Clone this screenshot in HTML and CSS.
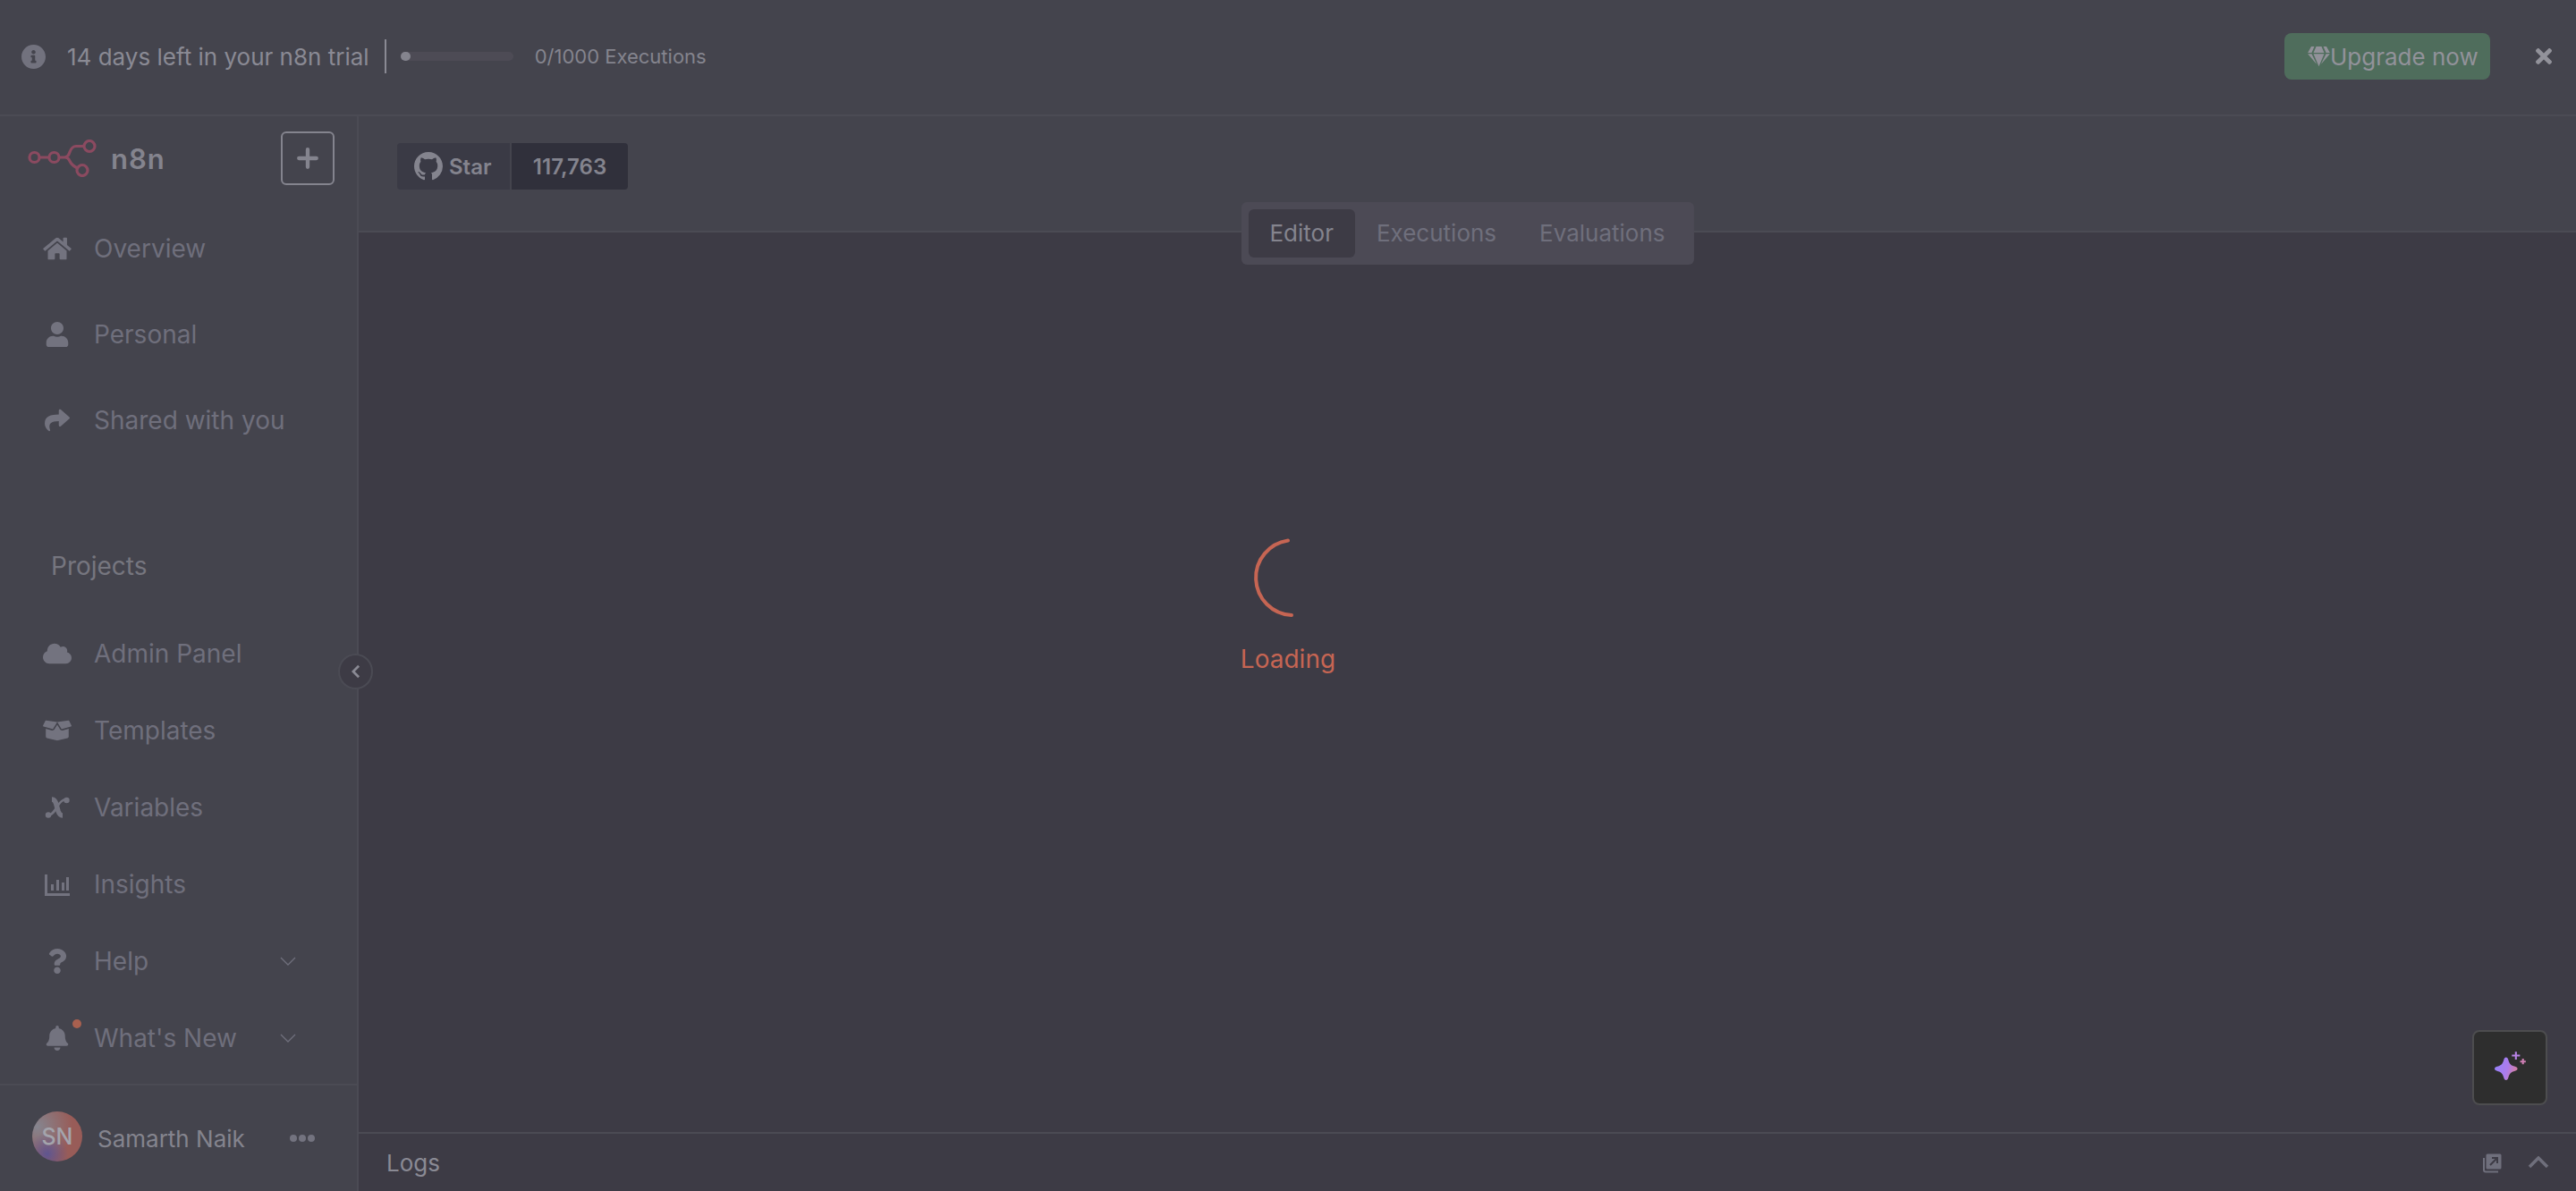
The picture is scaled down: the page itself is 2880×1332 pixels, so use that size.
FILE: index.html
```html
<!DOCTYPE html>
<html lang="en">

<head>
    <meta charset="UTF-8">
    <meta name="viewport" content="width=device-width, initial-scale=1.0">
    <title>n8n - Loading</title>
    <link rel="stylesheet" href="styles.css">
</head>

<body>
    <!-- Trial banner -->
    <div class="banner">
        <svg class="info-icon" viewBox="8 8 496 496"><path d="M256 8C119.043 8 8 119.083 8 256c0 136.997 111.043 248 248 248s248-111.003 248-248C504 119.083 392.957 8 256 8zm0 110c23.196 0 42 18.804 42 42s-18.804 42-42 42-42-18.804-42-42 18.804-42 42-42zm56 254c0 6.627-5.373 12-12 12h-88c-6.627 0-12-5.373-12-12v-24c0-6.627 5.373-12 12-12h12v-64h-12c-6.627 0-12-5.373-12-12v-24c0-6.627 5.373-12 12-12h64c6.627 0 12 5.373 12 12v100h12c6.627 0 12 5.373 12 12v24z"/></svg>
        <span class="trial-text">14 days left in your n8n trial</span>
        <span class="trial-sep"></span>
        <div class="progress"><div class="progress-dot"></div></div>
        <span class="exec-count">0/1000 Executions</span>
        <button class="upgrade">
            <svg class="gem" viewBox="0 0 576 512"><path d="M485.5 0L576 160H474.9L405.7 0h79.8zm-128 0l69.2 160H149.3L218.5 0h139zm-267 0h79.8l-69.2 160H0L90.5 0zM0 192h100.7l123 251.7c1.5 3.1-2.7 5.9-5 3.3L0 192zm148.2 0h279.6l-137 318.2c-1 2.4-4.5 2.4-5.5 0L148.2 192zm204.1 251.7l123-251.7H576L357.3 446.9c-2.3 2.7-6.5-.1-5-3.2z"/></svg>
            Upgrade now
        </button>
        <svg class="close-icon" viewBox="0 80 352 352"><path d="M242.72 256l100.07-100.07c12.28-12.28 12.28-32.19 0-44.48l-22.24-22.24c-12.28-12.28-32.19-12.28-44.48 0L176 189.28 75.93 89.21c-12.28-12.28-32.19-12.28-44.48 0L9.21 111.45c-12.28 12.28-12.28 32.19 0 44.48L109.28 256 9.21 356.07c-12.28 12.28-12.28 32.19 0 44.48l22.24 22.24c12.28 12.28 32.2 12.28 44.48 0L176 322.72l100.07 100.07c12.28 12.28 32.2 12.28 44.48 0l22.24-22.24c12.28-12.28 12.28-32.19 0-44.48L242.72 256z"/></svg>
    </div>

    <div class="app">
        <!-- Sidebar -->
        <aside class="sidebar">
            <div class="side-head">
                <svg class="logo" viewBox="0 0 80 42" fill="none">
                    <circle cx="7.5" cy="20" r="5.5"/>
                    <circle cx="29.5" cy="20" r="5.5"/>
                    <circle cx="69" cy="7.5" r="6"/>
                    <circle cx="61" cy="34.5" r="6"/>
                    <path d="M13 20h11M35 20h6c4 0 5-3 6-6 1.500-4 3-6.500 7-6.500h9M41 20c4 0 5 2 6.500 5 1.500 3 4 5 8 7"/>
                </svg>
                <span class="logo-name">n8n</span>
                <button class="plus-btn">
                    <svg viewBox="0 0 24 24"><path d="M12 3v18M3 12h18"/></svg>
                </button>
            </div>

            <a class="nav-item tall">
                <svg class="nav-icon" viewBox="0 0 576 512"><path d="M280.37 148.26L96 300.11V464a16 16 0 0 0 16 16l112.06-.29a16 16 0 0 0 15.92-16V368a16 16 0 0 1 16-16h64a16 16 0 0 1 16 16v95.64a16 16 0 0 0 16 16.05L464 480a16 16 0 0 0 16-16V300L295.67 148.26a12.19 12.19 0 0 0-15.3 0zM571.6 251.47L488 182.56V44.05a12 12 0 0 0-12-12h-56a12 12 0 0 0-12 12v72.61L318.47 43a48 48 0 0 0-61 0L4.34 251.47a12 12 0 0 0-1.6 16.9l25.5 31A12 12 0 0 0 45.15 301l235.22-193.74a12.19 12.19 0 0 1 15.3 0L530.9 301a12 12 0 0 0 16.9-1.6l25.5-31a12 12 0 0 0-1.7-16.93z"/></svg>
                <span>Overview</span>
            </a>
            <a class="nav-item tall">
                <svg class="nav-icon" viewBox="0 0 448 512"><path d="M224 256c70.7 0 128-57.3 128-128S294.7 0 224 0 96 57.3 96 128s57.3 128 128 128zm89.6 32h-16.7c-22.2 10.2-46.9 16-72.9 16s-50.6-5.800-72.900-16h-16.700C60.200 288 0 348.200 0 422.400V464c0 26.500 21.500 48 48 48h352c26.500 0 48-21.500 48-48v-41.600c0-74.200-60.200-134.400-134.400-134.400z"/></svg>
                <span>Personal</span>
            </a>
            <a class="nav-item tall">
                <svg class="nav-icon" viewBox="0 0 512 512"><path d="M503.691 189.836L327.687 37.851C312.281 24.546 288 35.347 288 56.015v80.053C127.371 137.907 0 170.100 0 322.326c0 61.441 39.581 122.309 83.333 154.132 13.653 9.931 33.111-2.533 28.077-18.631C66.066 312.814 132.917 274.316 288 272.085V360c0 20.700 24.300 31.453 39.687 18.164l176.004-152c11.071-9.562 11.086-26.753 0-36.328z"/></svg>
                <span>Shared with you</span>
            </a>

            <div class="side-label">Projects</div>

            <a class="nav-item">
                <svg class="nav-icon" viewBox="0 0 640 512"><path d="M537.600 226.600c4.100-10.700 6.400-22.400 6.400-34.600 0-53-43-96-96-96-19.700 0-38.100 6-53.300 16.200C367 64.200 315.300 32 256 32c-88.400 0-160 71.600-160 160 0 2.700.1 5.400.2 8.100C40.200 219.800 0 273.200 0 336c0 79.500 64.500 144 144 144h368c70.700 0 128-57.300 128-128 0-61.900-44-113.600-102.400-125.400z"/></svg>
                <span>Admin Panel</span>
            </a>
            <a class="nav-item">
                <svg class="nav-icon" viewBox="0 0 640 512"><path d="M425.700 256c-16.900 0-32.800-9-41.400-23.400L320 126l-64.200 106.600c-8.700 14.500-24.600 23.500-41.500 23.500-4.500 0-9-.6-13.300-1.900L64 215v178c0 14.700 10 27.500 24.200 31l216.200 54.100c10.200 2.500 20.900 2.500 31 0L551.800 424c14.200-3.600 24.200-16.400 24.200-31V215l-137 39.100c-4.300 1.300-8.800 1.900-13.300 1.900zm212.600-112.200L586.800 41c-3.100-6.200-9.800-9.800-16.700-8.900L320 64l91.700 152.100c3.800 6.300 11.400 9.300 18.500 7.300l197.900-56.500c9.900-2.900 14.700-13.900 10.200-23.100zM53.200 41L1.700 143.800c-4.600 9.200.3 20.200 10.100 23l197.900 56.500c7.100 2 14.700-1 18.500-7.300L320 64 69.800 32.100c-6.900-.8-13.500 2.700-16.600 8.900z"/></svg>
                <span>Templates</span>
            </a>
            <a class="nav-item">
                <svg class="nav-icon" viewBox="0 0 32 28">
                    <path class="var-thick" d="M10 5c3 0 4 2 5 6l2 7c1 3 2 5 5 5"/>
                    <path class="var-thin" d="M26 5c-4 0-7 3-10 8s-6 10-10 10"/>
                    <circle cx="26.500" cy="6" r="3.200"/>
                    <circle cx="6" cy="22.500" r="3.200"/>
                </svg>
                <span>Variables</span>
            </a>
            <a class="nav-item">
                <svg class="nav-icon" viewBox="0 0 32 28">
                    <rect x="2" y="3" width="3" height="24"/>
                    <rect x="2" y="24" width="28" height="3"/>
                    <rect x="9" y="14" width="3" height="7"/>
                    <rect x="15" y="9" width="3" height="12"/>
                    <rect x="21" y="12" width="3" height="9"/>
                    <rect x="26" y="6" width="3" height="15"/>
                </svg>
                <span>Insights</span>
            </a>
            <a class="nav-item">
                <svg class="nav-icon" viewBox="0 0 512 512"><path d="M266 0C186 0 135 33 94 91c-7 11-5 25 5 33l43 33c10 8 25 6 33-4 25-31 44-49 83-49 31 0 69 20 69 50 0 22-19 34-49 51-35 20-82 45-82 106v9c0 13 11 24 24 24h72c13 0 24-11 24-24v-6c0-43 125-45 125-161C441 66 351 0 266 0zM256 373c-38 0-69 31-69 70s31 69 69 69 69-31 69-69-31-70-69-70z"/></svg>
                <span>Help</span>
                <svg class="chevron" viewBox="0 0 18 10"><path d="M1 1l8 8 8-8"/></svg>
            </a>
            <a class="nav-item">
                <span class="bell-wrap">
                    <svg class="nav-icon" viewBox="0 0 448 512"><path d="M224 512c35.320 0 63.970-28.650 63.970-64H160.030c0 35.350 28.650 64 63.970 64zm215.390-149.710c-19.320-20.760-55.470-51.990-55.470-154.290 0-77.700-54.480-139.900-127.940-155.160V32c0-17.670-14.320-32-31.980-32s-31.980 14.330-31.980 32v20.840C118.560 68.100 64.080 130.300 64.080 208c0 102.300-36.150 133.530-55.470 154.290-6 6.450-8.660 14.160-8.610 21.710.11 16.400 12.980 32 32.100 32h383.800c19.120 0 32-15.600 32.100-32 .05-7.550-2.610-15.270-8.610-21.710z"/></svg>
                    <span class="badge"></span>
                </span>
                <span>What's New</span>
                <svg class="chevron" viewBox="0 0 18 10"><path d="M1 1l8 8 8-8"/></svg>
            </a>

            <div class="side-foot">
                <div class="avatar">SN</div>
                <span class="user-name">Samarth Naik</span>
                <div class="dots"><i></i><i></i><i></i></div>
            </div>

            <button class="collapse-btn">
                <svg viewBox="0 0 12 18"><path d="M9.500 2l-7 7 7 7"/></svg>
            </button>
        </aside>

        <!-- Main area -->
        <main class="main">
            <header class="header">
                <div class="gh-star">
                    <span class="gh-left">
                        <svg viewBox="0 0 16 16"><path d="M8 0C3.580 0 0 3.580 0 8c0 3.540 2.290 6.530 5.470 7.590.4.070.55-.17.55-.38 0-.19-.01-.82-.01-1.490-2.010.37-2.530-.49-2.690-.94-.09-.23-.48-.94-.82-1.130-.28-.15-.68-.52-.01-.53.63-.01 1.080.58 1.230.82.72 1.210 1.870.87 2.330.66.07-.52.28-.87.51-1.070-1.780-.2-3.640-.89-3.640-3.950 0-.87.31-1.590.82-2.150-.08-.2-.36-1.020.08-2.120 0 0 .67-.21 2.200.82.64-.18 1.320-.27 2-.27.68 0 1.360.09 2 .27 1.530-1.040 2.200-.82 2.200-.82.44 1.100.16 1.920.08 2.120.51.56.82 1.270.82 2.150 0 3.070-1.870 3.750-3.650 3.950.29.25.54.73.54 1.480 0 1.070-.01 1.930-.01 2.200 0 .21.15.46.55.38A8.013 8.013 0 0016 8c0-4.420-3.580-8-8-8z"/></svg>
                        Star
                    </span>
                    <span class="gh-count">117,763</span>
                </div>
                <div class="tabs">
                    <span class="tab active">Editor</span>
                    <span class="tab">Executions</span>
                    <span class="tab">Evaluations</span>
                </div>
            </header>

            <div class="canvas">
                <button class="ask-btn">
                    <svg viewBox="0 0 40 40">
                        <defs>
                            <linearGradient id="spark" x1="0" y1="0" x2="1" y2="0.300">
                                <stop offset="0.200" stop-color="#9a80f6"/>
                                <stop offset="0.650" stop-color="#ac7cec"/>
                                <stop offset="1" stop-color="#d07fa8"/>
                            </linearGradient>
                        </defs>
                        <path fill="url(#spark)" d="M16 9c1.200 0 1.900 1 2.400 2.600 1.300 4.600 2.600 6 7.200 7.200 1.600.5 2.600 1.200 2.600 2.400s-1 1.900-2.600 2.400c-4.600 1.200-5.900 2.600-7.200 7.200-.5 1.600-1.200 2.600-2.400 2.600s-1.900-1-2.400-2.600c-1.300-4.600-2.600-6-7.200-7.200-1.600-.5-2.600-1.200-2.600-2.400s1-1.900 2.600-2.400c4.600-1.200 5.900-2.600 7.200-7.200C14.100 10 14.800 9 16 9z"/>
                        <path class="spark-small" stroke="#b883e6" d="M26.500 3v8.500M22.200 7.200h8.600"/>
                        <path class="spark-small" stroke="#cf7fb4" d="M34 10.500v6M31 13.500h6"/>
                    </svg>
                </button>
            </div>

            <footer class="logs">
                <span class="logs-title">Logs</span>
                <svg class="popout" viewBox="0 0 24 24">
                    <path class="popout-back" d="M7 2.500h14a1.500 1.500 0 0 1 1.500 1.500v14a1.500 1.500 0 0 1-1.500 1.500H7a1.500 1.500 0 0 1-1.500-1.500V4a1.500 1.500 0 0 1 1.500-1.500z"/>
                    <path class="popout-front" d="M3 7v13.500a2 2 0 0 0 2 2h14"/>
                    <path class="popout-arrow" d="M10 15l8-8M12 7h6v6"/>
                </svg>
                <svg class="logs-chevron" viewBox="0 0 24 14"><path d="M2 12L12 2l10 10"/></svg>
            </footer>
        </main>
    </div>

    <!-- Loading state sits over the whole page -->
    <div class="loader">
        <svg class="spinner" viewBox="0 0 90 90"><path d="M45 2.500A42 42 0 0 0 49 86"/></svg>
        <span class="loader-text">Loading</span>
    </div>
</body>

</html>
```

FILE: styles.css
```css
* {
    margin: 0;
    padding: 0;
    box-sizing: border-box;
}

html, body {
    height: 100%;
    overflow: hidden;
    font-family: Inter, "Noto Sans", sans-serif;
    background: #3d3b45;
}

body {
    display: flex;
    flex-direction: column;
    position: relative;
}

button {
    font-family: inherit;
    border: none;
}

/* Trial banner */
.banner {
    height: 130px;
    flex-shrink: 0;
    display: flex;
    align-items: center;
    padding: 0 27px 2px 24px;
    background: #44444d;
    border-bottom: 2px solid #4b4b54;
}

.info-icon {
    width: 27px;
    height: 27px;
    fill: #72727e;
}

.trial-text {
    margin-left: 24px;
    font-size: 26px;
    color: #8a8a94;
}

.trial-sep {
    width: 2px;
    height: 38px;
    margin-left: 17px;
    background: #8a8a94;
}

.progress {
    width: 126px;
    height: 10px;
    margin-left: 16px;
    border-radius: 5px;
    background: #4d4b55;
}

.progress-dot {
    width: 11px;
    height: 10px;
    border-radius: 5px;
    background: #84848e;
}

.exec-count {
    margin-left: 24px;
    font-size: 22px;
    color: #84848e;
}

.upgrade {
    display: flex;
    align-items: center;
    height: 52px;
    width: 230px;
    margin-left: auto;
    padding-left: 26px;
    border-radius: 8px;
    background: #4f6d5c;
    color: #92929a;
    font-size: 26px;
}

.gem {
    width: 25px;
    height: 22px;
    fill: #92929a;
}

.close-icon {
    width: 18px;
    height: 18px;
    margin-left: 51px;
    fill: #92929a;
}

.app {
    flex: 1;
    display: flex;
    min-height: 0;
}

/* Sidebar */
.sidebar {
    position: relative;
    width: 401px;
    flex-shrink: 0;
    display: flex;
    flex-direction: column;
    background: #44444d;
    border-right: 2px solid #4b4b54;
}

.side-head {
    height: 100px;
    display: flex;
    align-items: center;
    padding: 0 25px 6px 31px;
}

.logo {
    width: 80px;
    height: 42px;
}

.logo circle, .logo path {
    stroke: #8b4a60;
    stroke-width: 3.200;
}

.logo-name {
    margin-left: 13px;
    font-size: 31px;
    font-weight: 600;
    letter-spacing: 1px;
    color: #84848e;
}

.plus-btn {
    width: 60px;
    height: 60px;
    margin-left: auto;
    display: flex;
    align-items: center;
    justify-content: center;
    border: 2px solid #84848e;
    border-radius: 6px;
    background: transparent;
}

.plus-btn svg {
    width: 26px;
    height: 26px;
    fill: none;
    stroke: #84848e;
    stroke-width: 4;
    stroke-linecap: round;
}

.nav-item {
    height: 86px;
    flex-shrink: 0;
    display: flex;
    align-items: center;
    gap: 25px;
    padding: 0 68px 0 48px;
    font-size: 28px;
    color: #6f6f7c;
}

.nav-item.tall {
    height: 96px;
}

.nav-icon {
    width: 32px;
    height: 28px;
    flex-shrink: 0;
    fill: #73737f;
}

.var-thick, .var-thin {
    fill: none;
    stroke: #73737f;
}

.var-thick {
    stroke-width: 5.500;
}

.var-thin {
    stroke-width: 2.500;
}

.chevron {
    width: 18px;
    height: 10px;
    margin-left: auto;
    fill: none;
    stroke: #6f6f7c;
    stroke-width: 1.300;
}

.bell-wrap {
    position: relative;
    display: flex;
}

.badge {
    position: absolute;
    top: -7px;
    right: -11px;
    width: 10px;
    height: 10px;
    border-radius: 50%;
    background: #a8604f;
}

.side-label {
    margin: 98px 0 38px 57px;
    height: 34px;
    line-height: 34px;
    font-size: 28px;
    color: #76767f;
}

.side-foot {
    margin-top: auto;
    height: 120px;
    display: flex;
    align-items: center;
    padding: 0 47px 0 36px;
    border-top: 2px solid #4b4b54;
}

.avatar {
    width: 56px;
    height: 56px;
    margin-bottom: 4px;
    display: flex;
    align-items: center;
    justify-content: center;
    border-radius: 50%;
    font-size: 25px;
    font-weight: 500;
    color: #a4a4ac;
    background:
        radial-gradient(circle at 30% 85%, #5f5590 0, rgba(95, 85, 144, 0) 38%),
        radial-gradient(circle at 10% 30%, #85858f 0, rgba(133, 133, 143, 0) 62%),
        #985c58;
}

.user-name {
    margin-left: 17px;
    font-size: 26px;
    color: #84848e;
}

.dots {
    margin-left: auto;
    display: flex;
    gap: 2px;
}

.dots i {
    width: 8px;
    height: 8px;
    border-radius: 50%;
    background: #73737f;
}

.collapse-btn {
    position: absolute;
    top: 601px;
    right: -18px;
    width: 39px;
    height: 40px;
    display: flex;
    align-items: center;
    justify-content: center;
    border: 2px solid #4b4b54;
    border-radius: 50%;
    background: #3d3b45;
    z-index: 2;
}

.collapse-btn svg {
    width: 12px;
    height: 16px;
    fill: none;
    stroke: #8a8a94;
    stroke-width: 3;
}

/* Main area */
.main {
    flex: 1;
    min-width: 0;
    display: flex;
    flex-direction: column;
}

.header {
    position: relative;
    height: 130px;
    flex-shrink: 0;
    display: flex;
    align-items: center;
    padding: 0 0 16px 43px;
    background: #44444d;
    border-bottom: 2px solid #4b4b54;
}

.gh-star {
    display: flex;
    height: 52px;
    border-radius: 4px;
    overflow: hidden;
    font-size: 24px;
    font-weight: 600;
    color: #84848e;
}

.gh-left {
    width: 128px;
    display: flex;
    align-items: center;
    gap: 7px;
    padding-left: 19px;
    background: #3a3a45;
    border-right: 2px solid #44444d;
}

.gh-left svg {
    width: 32px;
    height: 32px;
    fill: #84848e;
}

.gh-count {
    width: 130px;
    display: flex;
    align-items: center;
    justify-content: center;
    background: #30303b;
}

.tabs {
    position: absolute;
    top: 96px;
    left: 50%;
    transform: translateX(-50%);
    height: 70px;
    display: flex;
    align-items: center;
    padding: 0 8px;
    border-radius: 6px;
    background: #4c4a55;
    font-size: 26px;
    color: #6f6f7c;
}

.tab {
    height: 54px;
    line-height: 54px;
    padding: 0 24px;
    border-radius: 6px;
}

.tab.active {
    background: #3d3b45;
    color: #84848e;
}

.canvas {
    flex: 1;
    position: relative;
}

.ask-btn {
    position: absolute;
    right: 32px;
    bottom: 30px;
    width: 84px;
    height: 84px;
    display: flex;
    align-items: center;
    justify-content: center;
    border: 2px solid #4d4d4f;
    border-radius: 8px;
    background: #2e2e2e;
}

.ask-btn svg {
    width: 42px;
    height: 42px;
}

.spark-small {
    fill: none;
    stroke-width: 2;
}

.logs {
    height: 66px;
    flex-shrink: 0;
    display: flex;
    align-items: center;
    padding: 0 30px 0 31px;
    border-top: 2px solid #4b4b54;
    color: #8a8a94;
    font-size: 26px;
}

.popout {
    width: 24px;
    height: 24px;
    margin-left: auto;
}

.popout-back {
    fill: #6f6f7c;
}

.popout-front {
    fill: none;
    stroke: #6f6f7c;
    stroke-width: 2;
}

.popout-arrow {
    fill: none;
    stroke: #3d3b45;
    stroke-width: 2;
}

.logs-chevron {
    width: 24px;
    height: 14px;
    margin-left: 28px;
    fill: none;
    stroke: #6f6f7c;
    stroke-width: 3.500;
}

/* Loading overlay */
.loader {
    position: absolute;
    top: 0;
    left: 0;
    right: 0;
    bottom: 0;
    display: flex;
    flex-direction: column;
    align-items: center;
    padding-top: 602px;
    pointer-events: none;
    color: #c66553;
}

.spinner {
    width: 90px;
    height: 90px;
    fill: none;
    stroke: #c66553;
    stroke-width: 4;
    stroke-linecap: round;
}

.loader-text {
    margin-top: 28px;
    font-size: 28px;
}
```
